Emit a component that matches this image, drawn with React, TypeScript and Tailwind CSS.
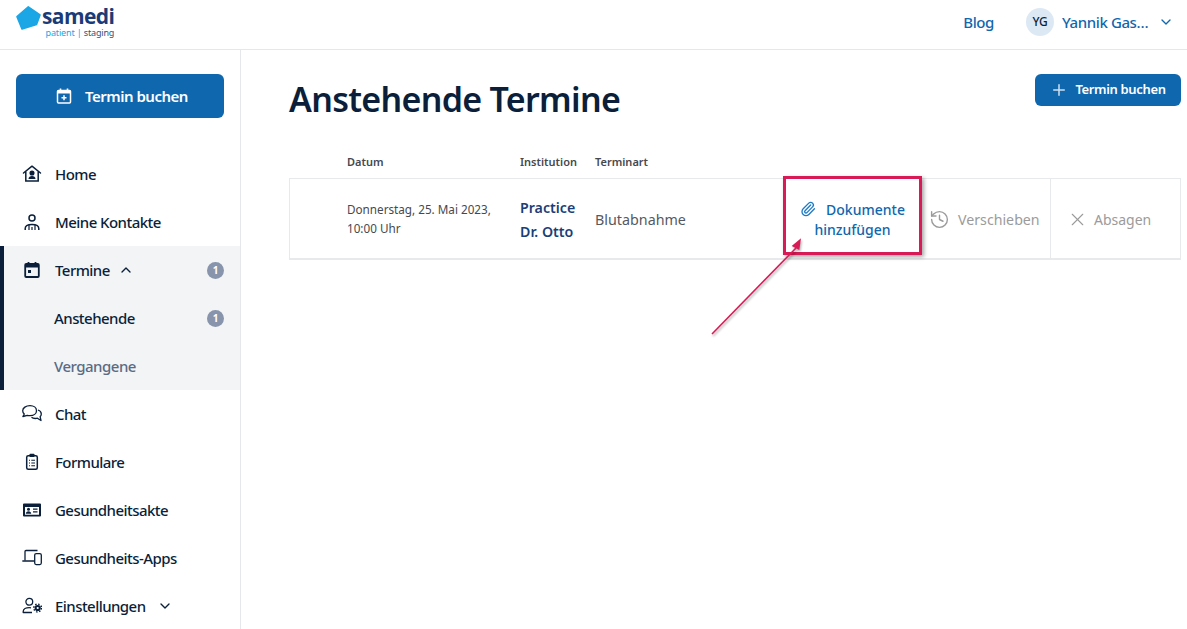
import React from 'react';
import { Plus, ChevronUp, ChevronDown, Paperclip, History, X } from 'lucide-react';

const navText = 'text-[15px] tracking-[-0.55px] font-medium text-[#0b1f3a]';

const HomeIcon = () => (
  <svg width="20" height="20" viewBox="0 0 20 20" fill="none" stroke="#0b1f3a" strokeWidth="1.5">
    <path d="M1.5 9 10 2.2 18.5 9" strokeLinecap="round" strokeLinejoin="round" />
    <path d="M3.8 7.5V17h12.4V7.5" />
    <circle cx="10" cy="9" r="1.8" fill="#0b1f3a" />
    <path d="M6.5 15c0-2 1.500-3 3.500-3s3.500 1 3.500 3z" fill="#0b1f3a" stroke="none" />
  </svg>
);

const ContactsIcon = () => (
  <svg width="20" height="20" viewBox="0 0 20 20" fill="none" stroke="#0b1f3a" strokeWidth="1.5">
    <circle cx="10" cy="6" r="3" />
    <path d="M3.200 18v-1.500c0-2.500 3-4 6.800-4s6.800 1.500 6.800 4V18" />
    <path d="M7 13v5M13 13v5M10 15v3" strokeWidth="1.200" />
  </svg>
);

const CalendarDotIcon = () => (
  <svg width="20" height="20" viewBox="0 0 20 20" fill="none">
    <rect x="3.200" y="4" width="13.600" height="13" rx="1" stroke="#0b1f3a" strokeWidth="1.800" />
    <path d="M3.200 4h13.600v3.500H3.200z" fill="#0b1f3a" />
    <path d="M6.500 2v3M13.500 2v3" stroke="#0b1f3a" strokeWidth="1.800" />
    <rect x="6" y="10" width="3" height="3" fill="#0b1f3a" />
  </svg>
);

const CalendarPlusIcon = () => (
  <svg width="18" height="18" viewBox="0 0 18 18" fill="none">
    <rect x="2.500" y="3.500" width="13" height="12.500" rx="1" stroke="#fff" strokeWidth="1.500" />
    <path d="M2.500 3.500h13v3h-13z" fill="#fff" />
    <path d="M5.500 1.500v3M12.500 1.500v3" stroke="#fff" strokeWidth="1.600" />
    <path d="M9 8.300v5M6.500 10.800h5" stroke="#fff" strokeWidth="1.500" />
  </svg>
);

const ChatIcon = () => (
  <svg width="20" height="20" viewBox="0 0 20 20" fill="none" stroke="#0b1f3a" strokeWidth="1.300" strokeLinejoin="round">
    <path d="M8 1.700c3.700 0 6.500 2.100 6.500 5s-2.800 5-6.500 5c-1 0-1.900-.1-2.700-.4L.9 12.500l1.400-2.500C1.100 9.100.7 8 .7 6.700c0-2.900 3.300-5 7.300-5z" />
    <path d="M16 6c2.100.7 3.300 2.100 3.300 4 0 1.100-.4 2-1.200 2.700l.9 3.800-3.600-2.300c-.8.200-1.400.3-2.200.3-1.500 0-2.800-.5-3.700-1.300" />
  </svg>
);

const ClipboardIcon = () => (
  <svg width="20" height="20" viewBox="0 0 20 20" fill="none" stroke="#0b1f3a">
    <rect x="4.700" y="3.700" width="10.600" height="13.600" rx="1.500" strokeWidth="1.500" />
    <rect x="7.500" y="1.800" width="5" height="3.200" rx=".8" fill="#0b1f3a" strokeWidth="0" />
    <path d="M7 8.300h1M9.300 8.300H13M7 11h1M9.300 11H13M7 13.700h1M9.300 13.700H13" strokeWidth="1.100" />
  </svg>
);

const RecordIcon = () => (
  <svg width="20" height="20" viewBox="0 0 20 20">
    <path fillRule="evenodd" fill="#0b1f3a" d="M2 3.500h16a1 1 0 0 1 1 1v11a1 1 0 0 1-1 1H2a1 1 0 0 1-1-1v-11a1 1 0 0 1 1-1zM3 7v7.800h14V7z" />
    <circle cx="6.500" cy="9.300" r="1.500" fill="#0b1f3a" />
    <path d="M3.800 13.800c0-1.600 1.200-2.500 2.700-2.500s2.700.9 2.700 2.500z" fill="#0b1f3a" />
    <path d="M11 9.200h4.500M11 11.800h4.500" stroke="#0b1f3a" strokeWidth="1.200" />
  </svg>
);

const DevicesIcon = () => (
  <svg width="20" height="20" viewBox="0 0 20 20" fill="none" stroke="#0b1f3a" strokeWidth="1.300">
    <path d="M3 12.500V3.500a1 1 0 0 1 1-1h11.500" />
    <path d="M.8 13h11" strokeLinecap="round" />
    <rect x="12.700" y="5.600" width="6.600" height="11" rx="1.500" />
  </svg>
);

const UserGearIcon = () => (
  <svg width="20" height="20" viewBox="0 0 20 20" fill="none" stroke="#0b1f3a" strokeWidth="1.300">
    <circle cx="7.300" cy="5.800" r="3.400" />
    <path d="M10 16.500H1.200v-.9c0-2.500 2.800-4 6.100-4 .6 0 1.200.1 1.700.2" strokeLinejoin="round" />
    <circle cx="15.700" cy="12" r="3.100" fill="#0b1f3a" strokeWidth="0" />
    <circle cx="15.700" cy="12" r="3.900" strokeWidth="1.500" strokeDasharray="1.500 1.560" />
    <circle cx="15.700" cy="12" r="1.100" fill="#fff" strokeWidth="0" />
  </svg>
);

const Logo = () => (
  <div className="flex items-start self-start">
    <svg width="26" height="26" viewBox="0 0 26 26" className="mt-[5px] shrink-0">
      <path d="M1 11.700 12.300 1.800 24 10 20.500 19.500 6 24z" fill="#1ba6e6" stroke="#1ba6e6" strokeWidth="1.600" strokeLinejoin="round" />
    </svg>
    <div className="flex flex-col items-end">
      <span className="font-['Open_Sans',sans-serif] text-[21px] leading-[20px] mt-[6px] font-bold tracking-[-0.6px] text-[#1a3b78]">samedi</span>
      <span className="text-[9px] leading-[11px] mt-[1px] tracking-[-0.15px]">
        <span className="text-[#1ba6e6]">patient | </span>
        <span className="text-[#33507f]">staging</span>
      </span>
    </div>
  </div>
);

const Badge = () => (
  <span className="w-[17px] h-[17px] rounded-full bg-[#8794ab] text-white text-[10px] font-bold flex items-center justify-center">1</span>
);

const NavItem = ({ icon, label, trailing }: { icon: React.ReactNode; label: string; trailing?: React.ReactNode }) => (
  <div className="h-12 flex items-center pl-[22px]">
    <span className="w-5 h-5 flex items-center justify-center shrink-0">{icon}</span>
    <span className={`ml-[13px] ${navText}`}>{label}</span>
    {trailing}
  </div>
);

export default function App() {
  return (
    <div className="relative h-screen overflow-hidden bg-white font-['Noto_Sans',sans-serif] text-[#0b1f3a]">
      <header className="h-[50px] border-b border-[#e5e7eb] flex items-center pl-4 pr-[13px]">
        <Logo />
        <div className="ml-auto flex items-center pb-[5px]">
          <span className="text-[15px] tracking-[-0.4px] font-medium text-[#0f67ae]">Blog</span>
          <span className="ml-8 w-7 h-7 rounded-full bg-[#dce9f5] text-[#0b1f3a] text-[12px] tracking-[-0.3px] font-medium flex items-center justify-center">YG</span>
          <span className="ml-2 w-[89px] text-[15px] leading-[22px] tracking-[-0.4px] font-medium text-[#0f67ae] whitespace-nowrap">Yannik Gas…</span>
          <ChevronDown size={16} className="ml-[7px] text-[#0f67ae]" />
        </div>
      </header>

      <div className="flex h-[579px]">
        <aside className="w-[241px] shrink-0 border-r border-[#e5e7eb] pt-6">
          <div className="px-4">
            <button className="w-full h-11 rounded-md bg-[#0f67ae] text-white text-[15px] tracking-[-0.5px] font-semibold flex items-center justify-center gap-[12px] pl-[3px]">
              <CalendarPlusIcon />
              Termin buchen
            </button>
          </div>
          <nav className="mt-8">
            <NavItem icon={<HomeIcon />} label="Home" />
            <NavItem icon={<ContactsIcon />} label="Meine Kontakte" />
            <div className="bg-[#f3f4f6] border-l-4 border-[#0b1f3a]">
              <div className="h-12 flex items-center pl-[18px] pr-4">
                <span className="w-5 h-5 flex items-center justify-center shrink-0"><CalendarDotIcon /></span>
                <span className={`ml-[13px] ${navText}`}>Termine</span>
                <ChevronUp size={16} className="ml-[8px]" />
                <span className="ml-auto"><Badge /></span>
              </div>
              <div className="h-12 flex items-center pl-[50px] pr-4">
                <span className={navText}>Anstehende</span>
                <span className="ml-auto"><Badge /></span>
              </div>
              <div className="h-12 flex items-center pl-[50px] pr-4">
                <span className="text-[15px] tracking-[-0.5px] font-medium text-[#5a6b84]">Vergangene</span>
              </div>
            </div>
            <NavItem icon={<ChatIcon />} label="Chat" />
            <NavItem icon={<ClipboardIcon />} label="Formulare" />
            <NavItem icon={<RecordIcon />} label="Gesundheitsakte" />
            <NavItem icon={<DevicesIcon />} label="Gesundheits-Apps" />
            <NavItem icon={<UserGearIcon />} label="Einstellungen" trailing={<ChevronDown size={16} className="ml-[11px]" />} />
          </nav>
        </aside>

        <main className="flex-1 pl-12 pr-[6px] pt-6">
          <div className="flex items-start justify-between">
            <h1 className="text-[34px] leading-[50px] font-semibold tracking-[-0.7px] text-[#0b1f3a]">Anstehende Termine</h1>
            <button className="w-[146px] h-8 rounded-md bg-[#0f67ae] text-white text-[13px] tracking-[-0.35px] font-semibold flex items-center justify-center gap-[7px]">
              <Plus size={18} className="text-[#cfe0f0]" />
              Termin buchen
            </button>
          </div>

          <div className="mt-[23px] h-[30px] flex items-center text-[11px] font-semibold text-[#45494f] mb-[1px]">
            <span className="ml-[58px] w-[173px]">Datum</span>
            <span className="w-[75px]">Institution</span>
            <span>Terminart</span>
          </div>

          <div className="h-[82px] border border-b-2 border-[#e8e9eb] flex items-center">
            <div className="ml-[57px] w-[173px] mt-[1px] text-[11.7px] leading-[19px] text-[#45494f]">
              Donnerstag, 25. Mai 2023,<br />10:00 Uhr
            </div>
            <div className="w-[75px] mt-[2px] text-[14.2px] leading-[24px] font-semibold text-[#1a3f78]">
              Practice<br />Dr. Otto
            </div>
            <div className="w-[188px] mt-[2px] text-[14.3px] text-[#55595f]">Blutabnahme</div>
            <div className="w-[139px] mt-[2px] text-center text-[14px] leading-[20px] font-medium text-[#0f67ae]">
              <Paperclip size={16} className="inline mr-[10px] -mt-[3px] text-[#1f7ac4]" />
              Dokumente<br />hinzufügen
            </div>
            <div className="w-[129px] h-full flex items-center text-[14.2px] text-[#9b9b9b] border-r border-[#e8e9eb] pl-[7px] pt-[2px]">
              <History size={21} strokeWidth={1.6} className="mr-[8px]" />
              Verschieben
            </div>
            <div className="flex-1 h-full flex items-center text-[14px] text-[#9b9b9b] pl-[16px] pt-[2px]">
              <X size={21} strokeWidth={1.3} className="mr-[6px]" />
              Absagen
            </div>
          </div>
        </main>
      </div>

      {/* Annotation drawn over the screenshot */}
      <div className="absolute left-[783px] top-[176px] w-[139px] h-[79px] border-[3px] border-[#d81b56] shadow-[2px_2px_4px_rgba(0,0,0,0.35)]" />
      <svg className="absolute left-[705px] top-[230px] drop-shadow-[1px_2px_1px_rgba(0,0,0,0.3)]" width="110" height="110" viewBox="0 0 110 110" fill="none">
        <path d="M7 104 91 18" stroke="#d81b56" strokeWidth="1.600" />
        <path d="M96 8.300 86.700 16 94.300 20z" fill="#d81b56" />
      </svg>
    </div>
  );
}
